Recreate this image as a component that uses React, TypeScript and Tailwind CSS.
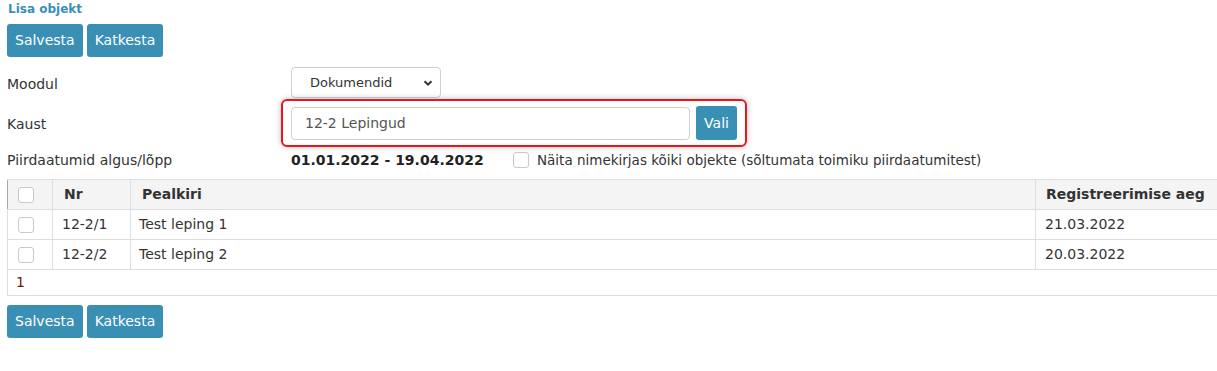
import React from "react";

// Dokumendi objekti lisamise vorm: moodul, kaust, piirdaatumid ja objektide tabel.

const FONT = "font-['DejaVu_Sans',Verdana,sans-serif]";

type Row = { id: string; nr: string; title: string; registered: string };

const ROWS: Row[] = [
  { id: "1", nr: "12-2/1", title: "Test leping 1", registered: "21.03.2022" },
  { id: "2", nr: "12-2/2", title: "Test leping 2", registered: "20.03.2022" },
];

function Btn({ children }: { children: React.ReactNode }) {
  return (
    <button className="h-[33px] rounded-[3px] bg-[#3a8fb5] px-[8px] text-[14px] text-white">
      {children}
    </button>
  );
}

function ButtonBar() {
  return (
    <div className="flex gap-[4px] pl-[7px]">
      <Btn>Salvesta</Btn>
      <Btn>Katkesta</Btn>
    </div>
  );
}

function Check() {
  return <span className="block h-[16px] w-[16px] rounded-[3px] border border-[#c8c8c8] bg-white" />;
}

export default function App() {
  return (
    <div className={`${FONT} h-[371px] w-[1217px] overflow-hidden bg-white text-[14px] text-[#333]`}>
      <div className="pl-[8px] pt-[1px] text-[12px] font-bold leading-[16px] text-[#3a8fb5]">Lisa objekt</div>

      <div className="mt-[7px]">
        <ButtonBar />
      </div>

      {/* Moodul */}
      <div className="mt-[10px] flex h-[31px] items-center">
        <div className="w-[291px] pl-[7px] pt-[3px]">Moodul</div>
        <div className="flex h-[31px] w-[150px] items-center justify-between rounded-[4px] border border-[#cfcfcf] bg-white pl-[18px] pr-[7px] text-[13px]">
          <span>Dokumendid</span>
          <svg width="10" height="10" viewBox="0 0 10 10">
            <path d="M1.5 3.2 L5 6.7 L8.5 3.2" fill="none" stroke="#333" strokeWidth="2" />
          </svg>
        </div>
      </div>

      {/* Kaust */}
      <div className="mt-[1px] flex h-[48px] items-center">
        <div className="w-[281px] pl-[7px] pt-[2px]">Kaust</div>
        <div className="flex h-[48px] w-[466px] items-center gap-[6px] rounded-[6px] border-2 border-[#e8161b] px-[8px] shadow-[0_0_6px_rgba(0,0,0,0.25)]">
          <div className="flex h-[33px] w-[400px] items-center rounded-[4px] border border-[#cfcfcf] bg-white pl-[13px] text-[14px] text-[#555]">
            12-2 Lepingud
          </div>
          <button className="h-[34px] w-[41px] rounded-[3px] bg-[#3a8fb5] text-[14px] text-white">Vali</button>
        </div>
      </div>

      {/* Piirdaatumid */}
      <div className="mt-[1px] flex h-[24px] items-center">
        <div className="w-[291px] pl-[7px]">Piirdaatumid algus/lõpp</div>
        <div className="w-[222px] font-bold text-[#222]">01.01.2022 - 19.04.2022</div>
        <Check />
        <span className="ml-[8px] text-[13.5px]">Näita nimekirjas kõiki objekte (sõltumata toimiku piirdaatumitest)</span>
      </div>

      {/* Tabel */}
      <div className="ml-[7px] mt-[7px] w-[1220px]">
        <table className="w-full border-collapse text-left">
          <thead>
            <tr className="h-[30px] bg-[#f4f4f4]">
              <th className="w-[45px] border border-[#dedede] border-l-[#aaa] pl-[10px]">
                <Check />
              </th>
              <th className="w-[78px] border border-[#dedede] pl-[11px] font-bold">Nr</th>
              <th className="border border-[#dedede] pl-[11px] font-bold">Pealkiri</th>
              <th className="w-[191px] border border-[#dedede] pl-[10px] font-bold">Registreerimise aeg</th>
            </tr>
          </thead>
          <tbody>
            {ROWS.map((r) => (
              <tr key={r.id} className="h-[30px]">
                <td className="border border-[#dedede] pl-[10px]">
                  <Check />
                </td>
                <td className="border border-[#dedede] pl-[9px]">{r.nr}</td>
                <td className="border border-[#dedede] pl-[8px]">{r.title}</td>
                <td className="border border-[#dedede] pl-[9px]">{r.registered}</td>
              </tr>
            ))}
            <tr className="h-[26px]">
              <td colSpan={4} className="border border-[#dedede] pl-[8px] text-[#7a1010]">1</td>
            </tr>
          </tbody>
        </table>
      </div>

      <div className="mt-[9px]">
        <ButtonBar />
      </div>
    </div>
  );
}
